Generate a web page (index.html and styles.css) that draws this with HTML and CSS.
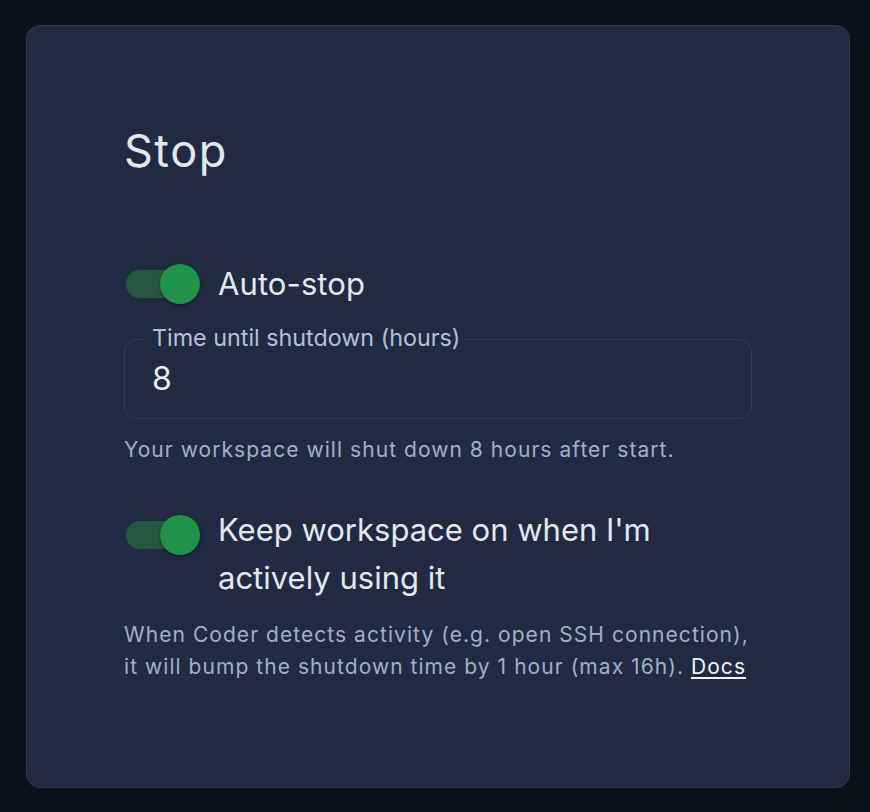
FILE: index.html
```html
<!DOCTYPE html>
<html lang="en">
<head>
<meta charset="utf-8">
<title>Stop</title>
<link rel="stylesheet" href="styles.css">
</head>
<body>
<section class="card">
  <h2 class="title">Stop</h2>

  <label class="switch-row">
    <span class="switch">
      <span class="track"></span>
      <span class="thumb"></span>
    </span>
    <span class="switch-label">Auto-stop</span>
  </label>

  <fieldset class="field">
    <legend class="field-legend">Time until shutdown (hours)</legend>
    <div class="field-value">8</div>
  </fieldset>
  <p class="helper helper-first">Your workspace will shut down 8 hours after start.</p>

  <label class="switch-row switch-row-top">
    <span class="switch">
      <span class="track"></span>
      <span class="thumb"></span>
    </span>
    <span class="switch-label switch-label-wrap">Keep workspace on when I'm actively using it</span>
  </label>
  <p class="helper helper-second">When Coder detects activity (e.g. open SSH connection), it will bump the shutdown time by 1 hour (max 16h). <a class="docs" href="#">Docs</a></p>
</section>
</body>
</html>
```

FILE: styles.css
```css
* { box-sizing: border-box; }

html, body {
  margin: 0;
  height: 812px;
}

body {
  background: #0c1019;
  padding: 25px 20px 24px 26px;
  font-family: Inter, "Noto Sans", sans-serif;
}

.card {
  height: 763px;
  background: #222a42;
  border: 1px solid #2d3a55;
  border-radius: 14px;
  padding: 98px 97px 0 97px;
}

.title {
  margin: 0;
  font-size: 45px;
  line-height: 54px;
  font-weight: 400;
  letter-spacing: 1.5px;
  color: #e1e7ef;
}

.switch-row {
  display: flex;
  align-items: center;
  margin: 68px 0 0 -22px;
}

.switch-row-top {
  align-items: flex-start;
  margin-top: 31px;
}

.switch {
  position: relative;
  flex: 0 0 116px;
  width: 116px;
  height: 76px;
}

.track {
  position: absolute;
  left: 24px;
  top: 24px;
  width: 68px;
  height: 28px;
  border-radius: 14px;
  background: #255741;
}

.thumb {
  position: absolute;
  left: 58px;
  top: 18px;
  width: 40px;
  height: 40px;
  border-radius: 50%;
  background: #21924a;
  box-shadow: 0 2px 2px rgba(0,0,0,0.25), 0 1px 5px rgba(0,0,0,0.15);
}

.switch-label {
  font-size: 31px;
  line-height: 48px;
  letter-spacing: 0.1px;
  color: #e2e8f0;
}

.switch-label-wrap {
  margin-top: 9px;
  letter-spacing: 0;
}

.field {
  margin: 2px 0 0 0;
  padding: 4px 27px 19px 27px;
  border: 1px solid #2f3c58;
  border-radius: 13px;
}

.field-legend {
  margin-left: -6px;
  padding: 0 6px 3px 6px;
  font-size: 23.3px;
  line-height: 28px;
  color: #b6c0d4;
}

.field-value {
  font-size: 32px;
  line-height: 40px;
  color: #e8edf4;
}

.helper {
  margin: 0;
  font-size: 21px;
  line-height: 32px;
  letter-spacing: 1.05px;
  color: #a3afc7;
}

.helper-first {
  margin-top: 15px;
}

.helper-second {
  margin-top: 17px;
}

.docs {
  color: #f1f4f8;
  text-decoration: underline;
  text-underline-offset: 3px;
}
```
